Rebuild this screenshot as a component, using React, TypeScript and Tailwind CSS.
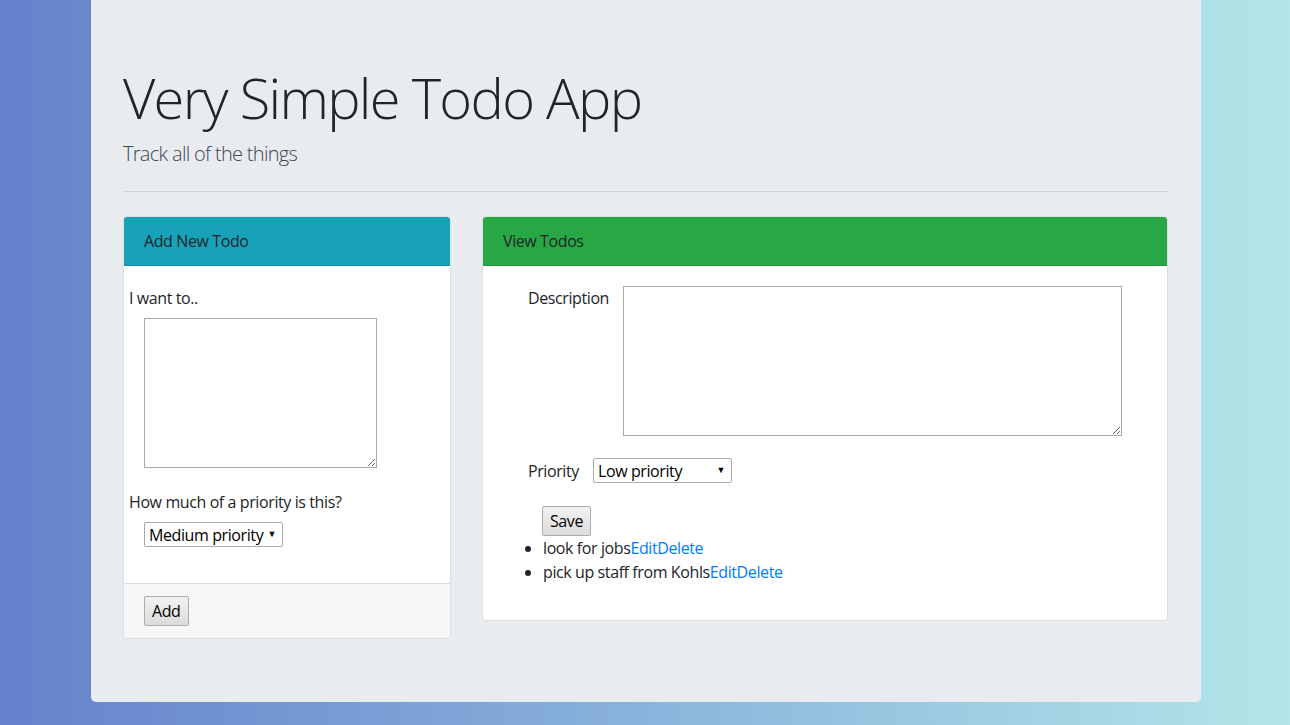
import { useState } from "react"

type Todo = { id: number; text: string }

const initialTodos: Todo[] = [
  { id: 1, text: "look for jobs" },
  { id: 2, text: "pick up staff from Kohls" },
]

function Select({ value, className }: { value: string; className: string }) {
  return (
    <div className={`relative h-[25px] border border-[#a9a9a9] bg-white rounded-[2px] flex items-center ${className}`}>
      <span className="pl-[4px] text-[16px] leading-none text-black">{value}</span>
      <span className="absolute right-[6px] top-[6px] text-[9px] leading-none text-black">▼</span>
    </div>
  )
}

function NativeButton({ label, className }: { label: string; className?: string }) {
  return (
    <button className={`h-[30px] px-[7px] border border-[#adadad] rounded-[2px] bg-gradient-to-b from-[#f2f2f2] to-[#dcdcdc] text-[16px] leading-none text-black ${className ?? ""}`}>
      {label}
    </button>
  )
}

export default function App() {
  const [todos] = useState<Todo[]>(initialTodos)

  return (
    <div
      className="min-h-[725px] w-full bg-gradient-to-r from-[#6581cc] to-[#b3e6e8] text-[#212529] text-[16px] leading-[24px] tracking-[-0.4px]"
      style={{ fontFamily: '"Open Sans", "Noto Sans", sans-serif' }}
    >
      <div className="ml-[91px] w-[1110px] bg-[#e9ecef] rounded-b-[5px] px-[32px] pt-[64px] pb-[64px] h-[702px]">
        <h1 className="text-[56px] leading-[67px] font-light mb-[8px] tracking-[-1.7px]">Very Simple Todo App</h1>
        <p className="text-[20px] leading-[30px] font-light text-[#3a4956] tracking-[-0.7px]">Track all of the things</p>
        <hr className="mt-[22px] mb-[24px] border-t border-[#d3d6d9]" />

        <div className="flex gap-[31px] items-start">
          {/* Add card */}
          <div className="w-[328px] bg-white rounded-[4px] border border-[#dcdfe2] overflow-hidden">
            <div className="h-[49px] bg-[#17a2b8] border-b border-[#1590a3] px-[20px] flex items-center">
              Add New Todo
            </div>
            <div className="pt-[20px] pb-[36px] pl-[5px]">
              <div>I want to..</div>
              <textarea className="block mt-[8px] ml-[15px] w-[233px] h-[150px] border border-[#a9a9a9] resize-y" />
              <div className="mt-[22px]">How much of a priority is this?</div>
              <Select value="Medium priority" className="mt-[8px] ml-[15px] w-[139px]" />
            </div>
            <div className="bg-[#f7f7f7] border-t border-[#dcdcdc] h-[55px] pl-[20px] flex items-center">
              <NativeButton label="Add" className="h-[29px]" />
            </div>
          </div>

          {/* View card */}
          <div className="w-[686px] bg-white rounded-[4px] border border-[#dcdfe2] overflow-hidden">
            <div className="h-[49px] bg-[#28a745] border-b border-[#23943d] px-[20px] flex items-center">
              View Todos
            </div>
            <div className="pt-[20px] pb-[20px] pl-[45px]">
              <div className="flex items-start">
                <div className="w-[95px]">Description</div>
                <textarea className="block w-[499px] h-[150px] border border-[#a9a9a9] resize-y" />
              </div>
              <div className="flex items-center mt-[22px]">
                <div className="w-[65px]">Priority</div>
                <Select value="Low priority" className="w-[139px]" />
              </div>
              <NativeButton label="Save" className="mt-[23px] ml-[14px] w-[49px]" />
              <ul className="list-disc pl-[15px] mb-[16px]">
                {todos.map((t) => (
                  <li key={t.id}>
                    {t.text}
                    <a className="text-[#007bff] cursor-pointer">Edit</a>
                    <a className="text-[#007bff] cursor-pointer">Delete</a>
                  </li>
                ))}
              </ul>
            </div>
          </div>
        </div>
      </div>
    </div>
  )
}
